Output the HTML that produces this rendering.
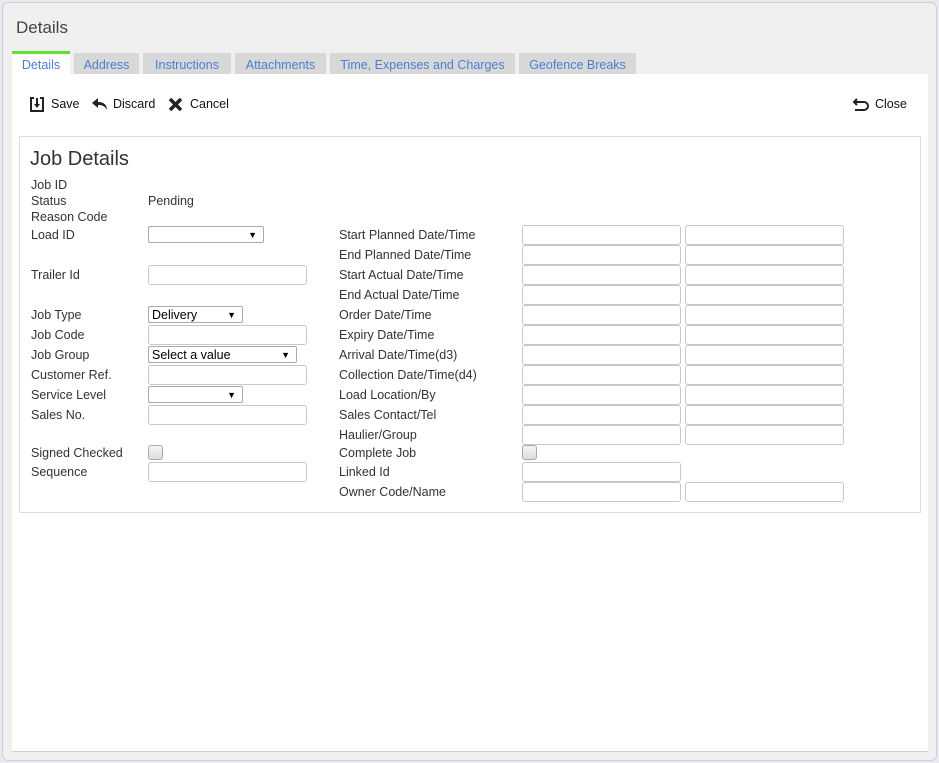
<!DOCTYPE html>
<html><head><style>
*{box-sizing:border-box;margin:0;padding:0}
body{width:939px;height:763px;background:#e9e9f2;font-family:"Liberation Sans",sans-serif;font-size:12.5px;color:#333;position:relative;overflow:hidden}
.dlg{position:absolute;left:2px;top:2px;width:935px;height:759px;background:#f0f0f0;border:1px solid #cfcfdc;border-radius:6px}
.a{position:absolute;white-space:nowrap}
.tab{position:absolute;top:53px;height:21px;background:#d8d8d8;color:#4a7fd0;font-size:12.5px;line-height:24px;text-align:center}
.in{position:absolute;height:20px;border:1px solid #c8c8c8;border-radius:3px;background:#fff}
.sel{position:absolute;height:17px;border:1px solid #aaa;border-radius:2px;background:#fff;font-size:12.5px;line-height:16px;padding-left:3px;color:#000}
.sel:after{content:"▼";position:absolute;right:6px;top:0;font-size:9px}
.cb{position:absolute;width:15px;height:15px;border:1px solid #aaa;border-radius:3px;background:linear-gradient(#f4f4f4,#dcdcdc)}
.l{position:absolute;white-space:nowrap;line-height:18px}
</style></head><body>
<div class="dlg"></div>
<div class="a" style="left:16px;top:18px;font-size:17px;color:#444">Details</div>
<div class="tab" style="left:12px;width:58px;background:#fff;border-top:3px solid #5fe02a;top:51px;height:24px;line-height:22px">Details</div>
<div class="tab" style="left:74px;width:65px">Address</div>
<div class="tab" style="left:143px;width:88px">Instructions</div>
<div class="tab" style="left:235px;width:91px">Attachments</div>
<div class="tab" style="left:330px;width:185px">Time, Expenses and Charges</div>
<div class="tab" style="left:519px;width:117px">Geofence Breaks</div>
<div class="a" style="left:12px;top:74px;width:916px;height:678px;background:#fff;border-bottom:1px solid #ccc"></div>
<svg class="a" style="left:29px;top:96px" width="16" height="17" viewBox="0 0 16 17"><path d="M1 1h4v2H3v11h10V3h-2V1h4v15H1z" fill="#222"/><path d="M7 2h2v6h2l-3 4-3-4h2z" fill="#222"/></svg>
<div class="a" style="left:51px;top:97px;color:#111">Save</div>
<svg class="a" style="left:92px;top:97px" width="16" height="14" viewBox="0 0 16 14"><path d="M6 1L0 6l6 5V8c4 0 7 1 9 5 0-5-3-8-9-8z" fill="#222"/></svg>
<div class="a" style="left:113px;top:97px;color:#111">Discard</div>
<svg class="a" style="left:168px;top:97px" width="15" height="15" viewBox="0 0 15 15"><path d="M2 2l11 11M13 2L2 13" stroke="#222" stroke-width="3.5"/></svg>
<div class="a" style="left:190px;top:97px;color:#111">Cancel</div>
<svg class="a" style="left:852px;top:97px" width="18" height="15" viewBox="0 0 18 15"><path d="M5 2L2 5l3 3M2 5h10a4 4 0 010 8H3" stroke="#222" stroke-width="2" fill="none"/></svg>
<div class="a" style="left:875px;top:97px;color:#111">Close</div>
<div class="a" style="left:19px;top:136px;width:902px;height:377px;border:1px solid #ddd"></div>
<div class="a" style="left:30px;top:148px;font-size:20px;color:#333">Job Details</div>
<div class="l" style="left:31px;top:176px">Job ID</div>
<div class="l" style="left:31px;top:192px">Status</div>
<div class="l" style="left:148px;top:192px">Pending</div>
<div class="l" style="left:31px;top:208px">Reason Code</div>
<div class="l" style="left:31px;top:226px">Load ID</div>
<div class="sel" style="left:148px;top:226px;width:116px"></div>
<div class="l" style="left:31px;top:266px">Trailer Id</div>
<div class="in" style="left:148px;top:265px;width:159px"></div>
<div class="l" style="left:31px;top:306px">Job Type</div>
<div class="sel" style="left:148px;top:306px;width:95px">Delivery</div>
<div class="l" style="left:31px;top:326px">Job Code</div>
<div class="in" style="left:148px;top:325px;width:159px"></div>
<div class="l" style="left:31px;top:346px">Job Group</div>
<div class="sel" style="left:148px;top:346px;width:149px">Select a value</div>
<div class="l" style="left:31px;top:366px">Customer Ref.</div>
<div class="in" style="left:148px;top:365px;width:159px"></div>
<div class="l" style="left:31px;top:386px">Service Level</div>
<div class="sel" style="left:148px;top:386px;width:95px"></div>
<div class="l" style="left:31px;top:406px">Sales No.</div>
<div class="in" style="left:148px;top:405px;width:159px"></div>
<div class="l" style="left:31px;top:444px">Signed Checked</div>
<div class="cb" style="left:148px;top:445px"></div>
<div class="l" style="left:31px;top:463px">Sequence</div>
<div class="in" style="left:148px;top:462px;width:159px"></div>

<div class="l" style="left:339px;top:226px">Start Planned Date/Time</div>
<div class="l" style="left:339px;top:246px">End Planned Date/Time</div>
<div class="l" style="left:339px;top:266px">Start Actual Date/Time</div>
<div class="l" style="left:339px;top:286px">End Actual Date/Time</div>
<div class="l" style="left:339px;top:306px">Order Date/Time</div>
<div class="l" style="left:339px;top:326px">Expiry Date/Time</div>
<div class="l" style="left:339px;top:346px">Arrival Date/Time(d3)</div>
<div class="l" style="left:339px;top:366px">Collection Date/Time(d4)</div>
<div class="l" style="left:339px;top:386px">Load Location/By</div>
<div class="l" style="left:339px;top:406px">Sales Contact/Tel</div>
<div class="l" style="left:339px;top:426px">Haulier/Group</div>
<div class="l" style="left:339px;top:444px">Complete Job</div>
<div class="l" style="left:339px;top:463px">Linked Id</div>
<div class="l" style="left:339px;top:483px">Owner Code/Name</div>

<div class="in" style="left:522px;top:225px;width:159px"></div><div class="in" style="left:685px;top:225px;width:159px"></div>
<div class="in" style="left:522px;top:245px;width:159px"></div><div class="in" style="left:685px;top:245px;width:159px"></div>
<div class="in" style="left:522px;top:265px;width:159px"></div><div class="in" style="left:685px;top:265px;width:159px"></div>
<div class="in" style="left:522px;top:285px;width:159px"></div><div class="in" style="left:685px;top:285px;width:159px"></div>
<div class="in" style="left:522px;top:305px;width:159px"></div><div class="in" style="left:685px;top:305px;width:159px"></div>
<div class="in" style="left:522px;top:325px;width:159px"></div><div class="in" style="left:685px;top:325px;width:159px"></div>
<div class="in" style="left:522px;top:345px;width:159px"></div><div class="in" style="left:685px;top:345px;width:159px"></div>
<div class="in" style="left:522px;top:365px;width:159px"></div><div class="in" style="left:685px;top:365px;width:159px"></div>
<div class="in" style="left:522px;top:385px;width:159px"></div><div class="in" style="left:685px;top:385px;width:159px"></div>
<div class="in" style="left:522px;top:405px;width:159px"></div><div class="in" style="left:685px;top:405px;width:159px"></div>
<div class="in" style="left:522px;top:425px;width:159px"></div><div class="in" style="left:685px;top:425px;width:159px"></div>
<div class="cb" style="left:522px;top:445px"></div>
<div class="in" style="left:522px;top:462px;width:159px"></div>
<div class="in" style="left:522px;top:482px;width:159px"></div><div class="in" style="left:685px;top:482px;width:159px"></div>
</body></html>
